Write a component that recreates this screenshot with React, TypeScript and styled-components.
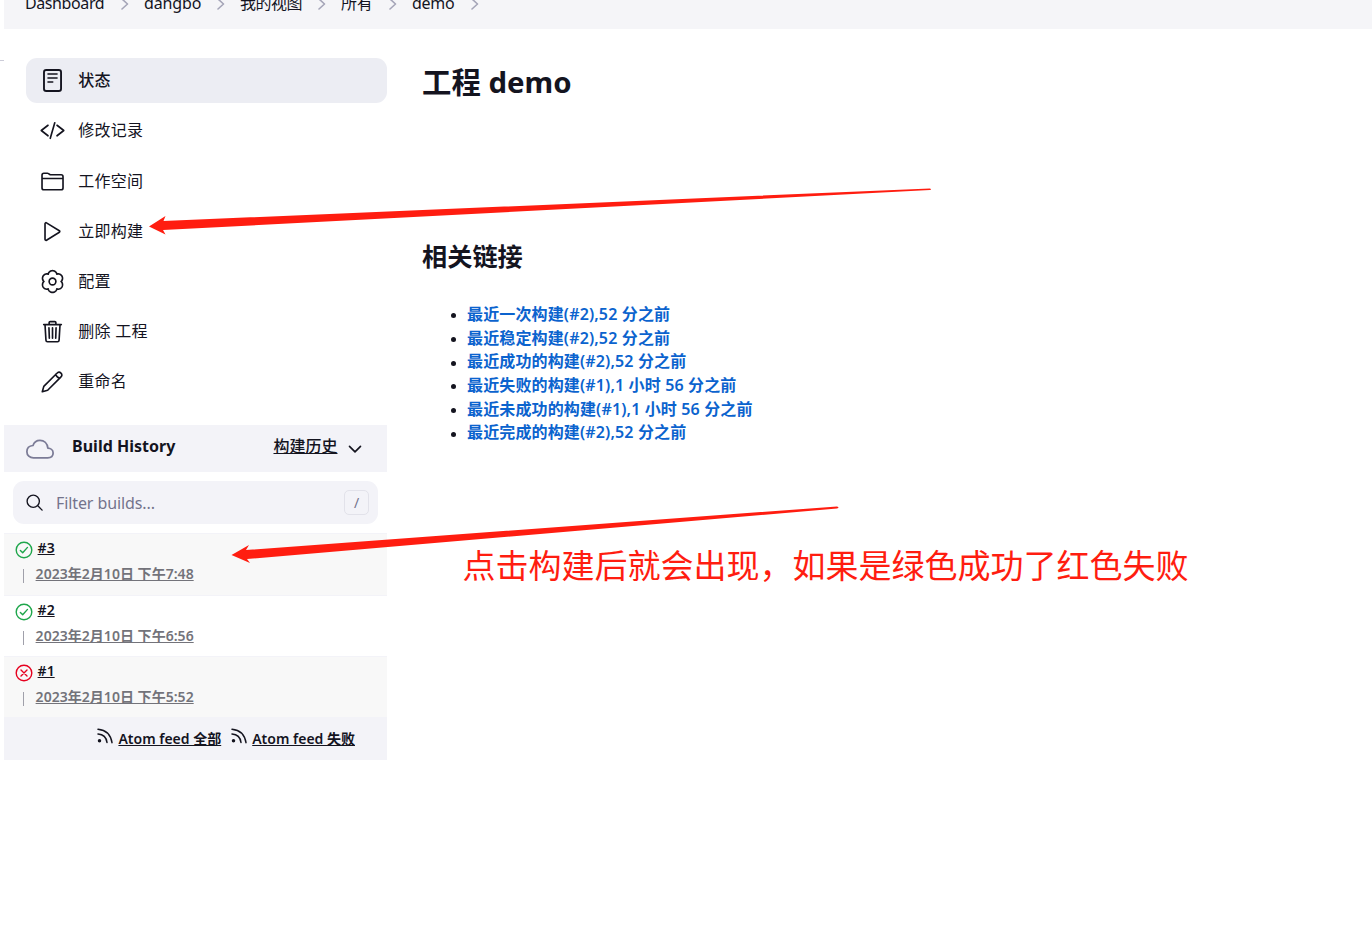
import React from "react";
import styled, { createGlobalStyle } from "styled-components";

const Global = createGlobalStyle`
  * { box-sizing: border-box; }
  body {
    margin: 0;
    background: #fff;
    color: #14141f;
    font: 16px/24px "Noto Sans", "Noto Sans CJK SC", sans-serif;
    overflow: hidden;
  }
`;

const Page = styled.div`
  position: relative;
  height: 933px;
  overflow: hidden;
  padding-left: 4px;
`;

const EdgeMark = styled.i`
  position: absolute;
  left: 0;
  top: 60px;
  width: 4px;
  height: 1px;
  background: #ccccd8;
`;

const Breadcrumbs = styled.nav`
  display: flex;
  height: 29px;
  padding-left: 21px;
  background: #f5f5f8;
`;

const Crumb = styled.span<{ $w: number; $ls?: number }>`
  width: ${(p) => p.$w}px;
  flex: none;
  display: flex;
  white-space: nowrap;
  margin-top: -9px;
  letter-spacing: ${(p) => p.$ls || 0}px;
`;

const CrumbChevron = styled.svg`
  width: 8px;
  height: 12px;
  margin: 7px 15px 0 auto;
  fill: none;
  stroke: #a5a5b8;
  stroke-width: 1.6;
  stroke-linecap: round;
  stroke-linejoin: round;
`;

const Columns = styled.div`
  display: flex;
`;

const Side = styled.aside`
  width: 383px;
  flex: none;
  padding-top: 29px;
`;

const Tasks = styled.nav`
  display: flex;
  flex-direction: column;
  gap: 5.2px;
  padding-left: 22px;
`;

const Task = styled.a<{ $active?: boolean }>`
  display: flex;
  align-items: center;
  height: 45px;
  padding: 0 0 0.6px 14.4px;
  gap: 13.8px;
  border-radius: 11px;
  background: ${(p) => (p.$active ? "#ecedf3" : "transparent")};
  font-weight: ${(p) => (p.$active ? 500 : 400)};
  letter-spacing: 0.3px;
`;

const Icon = styled.svg<{ $size?: number }>`
  width: ${(p) => p.$size || 24}px;
  height: ${(p) => p.$size || 24}px;
  flex: none;
  overflow: visible;
  fill: none;
  stroke: currentColor;
  stroke-width: 35;
  stroke-linecap: round;
  stroke-linejoin: round;
`;

const HistoryHead = styled.header`
  display: flex;
  align-items: center;
  height: 47px;
  margin-top: 21px;
  padding: 0 24px 0 22px;
  background: #f3f3f8;
`;

const CloudIcon = styled(Icon)`
  color: #7b7b96;
  stroke-width: 32;
`;

const HistoryTitle = styled.strong`
  margin: -5px auto 0 18px;
  font-weight: 700;
  letter-spacing: 0.02px;
`;

const Trend = styled.a`
  display: flex;
  align-items: center;
  gap: 9.5px;
  font-weight: 500;
`;

const Underlined = styled.span`
  text-decoration: underline;
  margin-top: -5px;
`;

const Search = styled.label`
  display: flex;
  align-items: center;
  height: 43px;
  margin: 9px;
  padding: 0 9px 0 11.5px;
  border-radius: 11px;
  background: #f3f3f8;
  color: #74748c;
`;

const SearchIcon = styled(Icon)`
  color: #14141f;
`;

const Placeholder = styled.span`
  margin: 0 auto 0 11.5px;
  letter-spacing: -0.1px;
`;

const Key = styled.kbd`
  width: 25px;
  height: 25px;
  border: 1px solid #e2e2ea;
  border-radius: 5px;
  font: 14px/23px "Noto Sans", sans-serif;
  text-align: center;
`;

const Build = styled.div<{ $shade?: boolean; $h: number }>`
  height: ${(p) => p.$h}px;
  padding: 2px 0 0 11px;
  border-top: 1px solid #f3f3f8;
  background: ${(p) => (p.$shade ? "#f8f8f8" : "#fff")};
  font-size: 14px;
  font-weight: 600;
`;

const BuildTop = styled.div`
  display: flex;
  height: 26px;
  gap: 4.6px;
`;

const StatusIcon = styled.svg<{ $bad?: boolean }>`
  width: 18px;
  height: 18px;
  margin-top: 5px;
  fill: none;
  stroke: ${(p) => (p.$bad ? "#e6001f" : "#1ea64b")};
  stroke-width: 1.4;
  stroke-linecap: round;
  stroke-linejoin: round;
`;

const BuildLink = styled.a`
  text-decoration: underline;
`;

const BuildDate = styled.div`
  display: flex;
  align-items: center;
  height: 24px;
  color: #73737a;
  letter-spacing: 0.03px;
`;

const Tick = styled.i`
  width: 1px;
  height: 14px;
  margin: 4px 11.6px 0 8px;
  background: #a0a0aa;
`;

const Feeds = styled.footer`
  display: flex;
  justify-content: flex-end;
  align-items: center;
  gap: 10px;
  height: 43px;
  padding-right: 32px;
  background: #f3f3f8;
  font-size: 14px;
  font-weight: 600;
`;

const Feed = styled.a`
  display: flex;
  gap: 5px;
`;

const FeedIcon = styled.svg`
  width: 16px;
  height: 16px;
  margin-top: 1px;
  fill: none;
  stroke: currentColor;
  stroke-width: 1.5;
  stroke-linecap: round;
`;

const Main = styled.main`
  padding: 33px 0 0 35px;
`;

const Title = styled.h1`
  margin: 0;
  font-size: 29.4px;
  line-height: 40px;
  font-weight: 700;
`;

const Subtitle = styled.h2`
  margin: 136px 0 0;
  font-size: 25.2px;
  line-height: 36px;
  font-weight: 700;
`;

const Links = styled.ul`
  margin: 29px 0 0;
  padding-left: 29px;
  list-style: none;
  line-height: 23.65px;
`;

const LinkItem = styled.li`
  display: flex;
  align-items: center;
  gap: 11px;

  &::before {
    content: "";
    width: 5px;
    height: 5px;
    margin-top: 2px;
    border-radius: 50%;
    background: #14141f;
  }
`;

const Anchor = styled.a`
  color: #0b63ce;
  font-weight: 600;
  letter-spacing: 0.14px;
`;

const Arrows = styled.svg`
  position: absolute;
  left: 0;
  top: 0;
  fill: #ff1d10;
`;

const Note = styled.p`
  position: absolute;
  left: 462.5px;
  top: 540px;
  margin: 0;
  color: #ff1d10;
  font: 33px/48px "Noto Sans CJK SC", sans-serif;
  white-space: nowrap;
`;

const crumbs = [
  { text: "Dashboard", w: 119, ls: -0.4 },
  { text: "dangbo", w: 96, ls: -0.15 },
  { text: "我的视图", w: 101, ls: -0.5 },
  { text: "所有", w: 71, ls: -0.3 },
  { text: "demo", w: 81.5, ls: -0.3 },
];

// Six-lobed outline of the settings cog, centred in a 512 box.
const cogPath =
  Array.from({ length: 96 }, (_, i) => {
    const a = (i / 96) * Math.PI * 2;
    const lobe = Math.abs(Math.cos(3 * (a + Math.PI / 2)));
    const r = 182 + 50 * Math.pow(lobe, 0.75);
    return `${i ? "L" : "M"}${(256 + r * Math.cos(a)).toFixed(1)} ${(256 + r * Math.sin(a)).toFixed(1)}`;
  }).join("") + "Z";

const tasks = [
  {
    text: "状态",
    icon: (
      <>
        <rect x="74" y="32" width="364" height="448" rx="48" strokeWidth="40" />
        <path d="M160 116h192M160 202h192M160 288h100" />
      </>
    ),
  },
  { text: "修改记录", icon: <path d="M160 368L16 256l144-112M352 368l144-112-144-112M304 90l-96 332" /> },
  {
    text: "工作空间",
    icon: (
      <path d="M440 432H72a40 40 0 01-40-40V120a40 40 0 0140-40h75.89a40 40 0 0122.19 6.72l27.84 18.56a40 40 0 0022.19 6.72H440a40 40 0 0140 40v240a40 40 0 01-40 40zM32 192h448" />
    ),
  },
  {
    text: "立即构建",
    icon: (
      <path d="M96 91v330c0 17.44 17 28.52 31 20.16l275-168.370c12.12-7.25 12.12-26.33 0-33.58L127 70.84c-14-8.36-31 2.72-31 20.16z" />
    ),
  },
  {
    text: "配置",
    icon: (
      <>
        <circle cx="256" cy="256" r="72" />
        <path d={cogPath} />
      </>
    ),
  },
  {
    text: "删除 工程",
    icon: (
      <path d="M96 112l20 330c.95 18.49 14.4 32 32 32h216c17.67 0 30.87-13.51 32-32l20-330M68 108h376M184 108V68a23.93 23.93 0 0124-24h96a23.93 23.93 0 0124 24v40M256 176v224M180 176l8 224M332 176l-8 224" />
    ),
  },
  {
    text: "重命名",
    icon: (
      <path d="M38 474l32-114L350 80Q392 34 436 76Q478 120 432 162L152 442ZM326 104q20 70 84 82" />
    ),
  },
];

const builds = [
  { id: "#3", date: "2023年2月10日 下午7:48", h: 62, bad: false },
  { id: "#2", date: "2023年2月10日 下午6:56", h: 61, bad: false },
  { id: "#1", date: "2023年2月10日 下午5:52", h: 61, bad: true },
];

const links = [
  "最近一次构建(#2),52 分之前",
  "最近稳定构建(#2),52 分之前",
  "最近成功的构建(#2),52 分之前",
  "最近失败的构建(#1),1 小时 56 分之前",
  "最近未成功的构建(#1),1 小时 56 分之前",
  "最近完成的构建(#2),52 分之前",
];

export default function App() {
  return (
    <Page>
      <Global />
      <EdgeMark />
      <Breadcrumbs>
        {crumbs.map((c) => (
          <Crumb key={c.text} $w={c.w} $ls={c.ls}>
            {c.text}
            <CrumbChevron viewBox="0 0 8 12">
              <path d="M1 1l5.500 5L1 11" />
            </CrumbChevron>
          </Crumb>
        ))}
      </Breadcrumbs>
      <Columns>
        <Side>
          <Tasks>
            {tasks.map((t, i) => (
              <Task key={t.text} $active={i === 0}>
                <Icon viewBox="-11 -11 512 512">{t.icon}</Icon>
                {t.text}
              </Task>
            ))}
          </Tasks>
          <HistoryHead>
            <CloudIcon $size={28} viewBox="0 0 512 512">
              <path d="M400 240c-8.89-89.54-71-144-144-144-69 0-113.44 48.2-128 96-60 6-112 43.59-112 112 0 66 54 112 120 112h260c55 0 100-27.44 100-88 0-59.82-53-85.76-96-88z" />
            </CloudIcon>
            <HistoryTitle>Build History</HistoryTitle>
            <Trend>
              <Underlined>构建历史</Underlined>
              <Icon $size={16} viewBox="0 0 512 512">
                <path strokeWidth="52" d="M80 170l176 176 176-176" />
              </Icon>
            </Trend>
          </HistoryHead>
          <Search>
            <SearchIcon $size={20} viewBox="10 10 512 512">
              <path d="M221.09 64a157.09 157.09 0 10157.09 157.09A157.1 157.1 0 00221.09 64zM338.29 338.29L448 448" />
            </SearchIcon>
            <Placeholder>Filter builds...</Placeholder>
            <Key>/</Key>
          </Search>
          {builds.map((b, i) => (
            <Build key={b.id} $shade={i % 2 === 0} $h={b.h}>
              <BuildTop>
                <StatusIcon $bad={b.bad} viewBox="0 0 18 18">
                  <circle cx="9" cy="9" r="7.8" />
                  <path d={b.bad ? "M6 6l6 6M12 6l-6 6" : "M5.4 9.4l2.3 2.4 4.8-5.4"} />
                </StatusIcon>
                <BuildLink>{b.id}</BuildLink>
              </BuildTop>
              <BuildDate>
                <Tick />
                <BuildLink>{b.date}</BuildLink>
              </BuildDate>
            </Build>
          ))}
          <Feeds>
            {["Atom feed 全部", "Atom feed 失败"].map((f) => (
              <Feed key={f}>
                <FeedIcon viewBox="0 0 16 16">
                  <path d="M1 1.2q12 1 14 13.500M1 6q8 .5 9 8.500" />
                  <circle cx="2.500" cy="12.800" r="1" fill="currentColor" />
                </FeedIcon>
                <BuildLink>{f}</BuildLink>
              </Feed>
            ))}
          </Feeds>
        </Side>
        <Main>
          <Title>工程 demo</Title>
          <Subtitle>相关链接</Subtitle>
          <Links>
            {links.map((l) => (
              <LinkItem key={l}>
                <Anchor>{l}</Anchor>
              </LinkItem>
            ))}
          </Links>
        </Main>
      </Columns>
      <Arrows width="1372" height="933" viewBox="0 0 1372 933">
        <path d="M149 226.500L165.500 216l-2 5L930 188.500q2 1 0 1.500L163 230l2.500 4.500z" />
        <path d="M231.500 555L249 545l-3 5L837 506.500q3 1 0 2L247 559l3 4z" />
      </Arrows>
      <Note>点击构建后就会出现，如果是绿色成功了红色失败</Note>
    </Page>
  );
}
